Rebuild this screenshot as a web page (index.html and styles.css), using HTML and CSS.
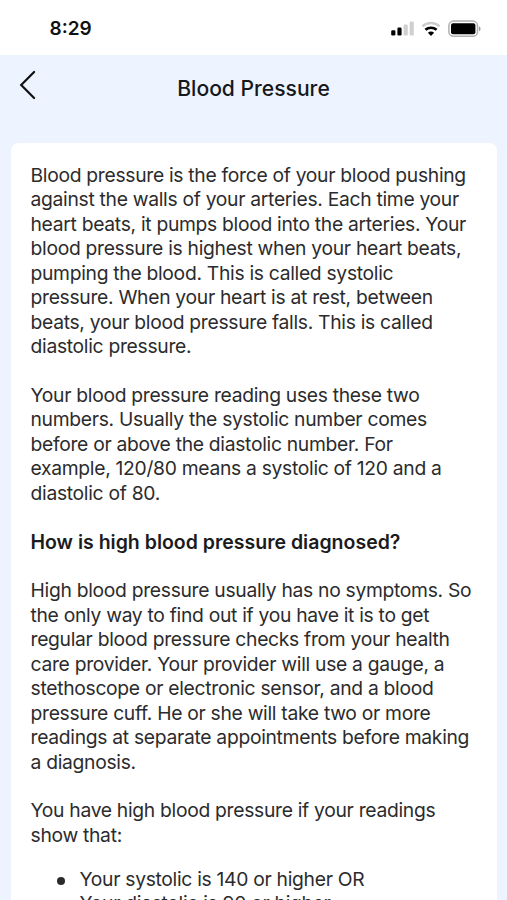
FILE: index.html
```html
<!DOCTYPE html>
<html lang="en">
<head>
    <meta charset="UTF-8">
    <meta name="viewport" content="width=device-width, initial-scale=1.0">
    <title>Blood Pressure</title>
    <link rel="stylesheet" href="styles.css">
</head>
<body>
    <div class="status-bar">
        <span class="time">8:29</span>
        <div class="status-icons">
            <svg class="signal" width="24" height="16" viewBox="0 0 24 16">
                <rect x="0.2" y="9.2" width="4.2" height="5.3" rx="1.3" fill="#000"/>
                <rect x="6.4" y="6.6" width="4.2" height="7.9" rx="1.3" fill="#000"/>
                <rect x="12.6" y="3.6" width="4.2" height="10.9" rx="1.3" fill="#d0d0d0"/>
                <rect x="18.6" y="0.6" width="4.2" height="13.9" rx="1.3" fill="#d0d0d0"/>
            </svg>
            <svg class="wifi" width="20" height="16" viewBox="0 0 20 16">
                <path d="M1.4 5.4C6.3 1 13.7 1 18.6 5.4" fill="none" stroke="#ccc" stroke-width="2.5"/>
                <path d="M4.4 8.8C7.6 5.9 12.4 5.9 15.6 8.8" fill="none" stroke="#000" stroke-width="2.5"/>
                <path d="M6.9 11.7C8.7 10.1 11.3 10.1 13.1 11.7L10 14.9Z" fill="#000"/>
            </svg>
            <svg class="battery" width="34" height="18" viewBox="0 0 34 18">
                <rect x="0.9" y="1.1" width="28.6" height="15.2" rx="4.6" fill="none" stroke="#b0b0b0" stroke-width="1.5"/>
                <rect x="3" y="3.2" width="24.4" height="11" rx="2" fill="#000"/>
                <path d="M31 6.2C33 7 33 10.4 31 11.2Z" fill="#999"/>
            </svg>
        </div>
    </div>

    <div class="nav-bar">
        <button class="back-button" aria-label="Back">
            <svg width="18" height="30" viewBox="0 0 18 30">
                <path d="M15.1 2L2.2 15L15.1 28" fill="none" stroke="#111" stroke-width="2.2" stroke-linecap="round"/>
            </svg>
        </button>
        <h1 class="title">Blood Pressure</h1>
    </div>

    <div class="card">
        <p>Blood pressure is the force of your blood pushing<br>
        against the walls of your arteries. Each time your<br>
        heart beats, it pumps blood into the arteries. Your<br>
        blood pressure is highest when your heart beats,<br>
        pumping the blood. This is called systolic<br>
        pressure. When your heart is at rest, between<br>
        beats, your blood pressure falls. This is called<br>
        diastolic pressure.</p>

        <p>Your blood pressure reading uses these two<br>
        numbers. Usually the systolic number comes<br>
        before or above the diastolic number. For<br>
        example, 120/80 means a systolic of 120 and a<br>
        diastolic of 80.</p>

        <h2>How is high blood pressure diagnosed?</h2>

        <p>High blood pressure usually has no symptoms. So<br>
        the only way to find out if you have it is to get<br>
        regular blood pressure checks from your health<br>
        care provider. Your provider will use a gauge, a<br>
        stethoscope or electronic sensor, and a blood<br>
        pressure cuff. He or she will take two or more<br>
        readings at separate appointments before making<br>
        a diagnosis.</p>

        <p>You have high blood pressure if your readings<br>
        show that:</p>

        <ul>
            <li>Your systolic is 140 or higher OR</li>
            <li>Your diastolic is 90 or higher</li>
        </ul>
    </div>
</body>
</html>
```
FILE: styles.css
```css
body {
    margin: 0;
    height: 900px;
    overflow: hidden;
    background-color: #edf4ff;
    font-family: Inter, "Liberation Sans", sans-serif;
    color: #2b2b2d;
}
/* Status bar */
.status-bar {
    display: flex;
    justify-content: space-between;
    align-items: center;
    height: 55px;
    padding: 2px 25px 0 49.5px;
    box-sizing: border-box;
    background-color: #fff;
}
.time {
    font-size: 19px;
    font-weight: 600;
    color: #111;
}
.status-icons {
    display: flex;
    align-items: center;
}
.wifi {
    margin-left: 6px;
}
.battery {
    margin-left: 7px;
}
/* Header */
.nav-bar {
    display: grid;
    grid-template-columns: 60px 1fr 60px;
    align-items: center;
    height: 88px;
    padding-bottom: 22px;
    box-sizing: border-box;
}
.back-button {
    display: flex;
    padding: 0 0 7px 19px;
    border: 0;
    background: none;
}
.title {
    margin: 0;
    font-size: 21.1px;
    font-weight: 500;
    text-align: center;
    color: #16181b;
}
/* Article */
.card {
    margin: 0 10px 0 11px;
    padding: 20px 19.5px;
    border-radius: 8px;
    background-color: #fff;
    font-size: 19.3px;
    line-height: 24.44px;
    letter-spacing: -0.3px;
    white-space: nowrap;
}
.card p,
.card h2 {
    margin: 0 0 24.44px;
}
.card h2 {
    font-size: 19.5px;
    font-weight: 600;
    letter-spacing: 0;
    color: #1b1b1d;
}
.card ul {
    margin: -5px 0 0;
    padding-left: 49px;
    list-style: none;
}
.card li::before {
    content: "";
    display: inline-block;
    width: 8px;
    height: 8px;
    margin-left: -22.5px;
    margin-right: 14.5px;
    border-radius: 50%;
    background-color: #2b2b2d;
    vertical-align: 1px;
}
```
